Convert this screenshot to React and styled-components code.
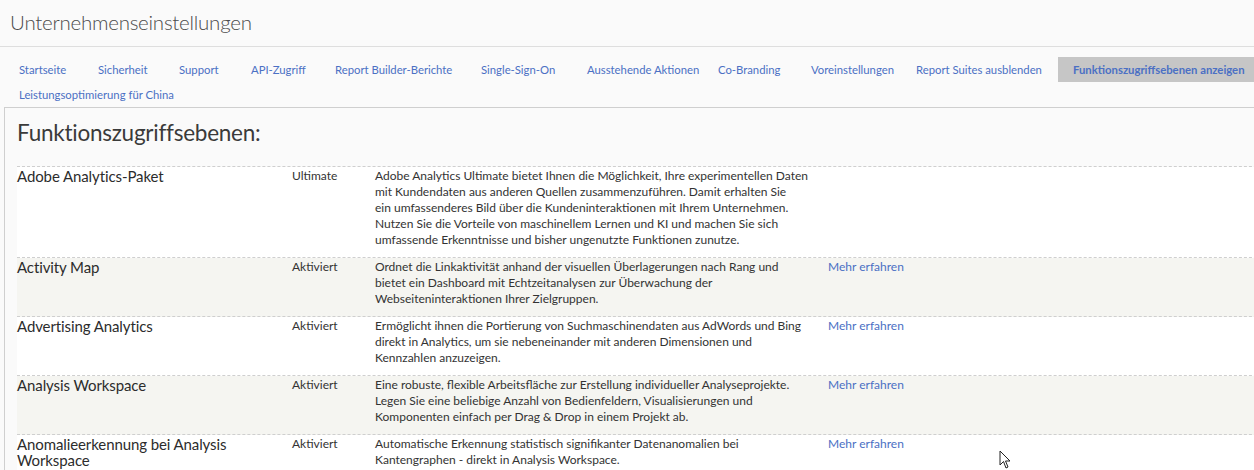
import React from "react";
import styled, { createGlobalStyle } from "styled-components";

const GlobalStyle = createGlobalStyle`
  html, body {
    margin: 0;
    padding: 0;
    background: #fafafa;
    overflow: hidden;
  }
  body {
    font-family: Lato, "Open Sans", sans-serif;
    color: #333;
  }
`;

const Page = styled.div`
  width: 1254px;
  height: 470px;
  overflow: hidden;
  position: relative;
`;

const Header = styled.div`
  height: 46px;
  padding-left: 10px;
  border-bottom: 1px solid #dedede;
  display: flex;
  align-items: center;
`;

const Title = styled.h1`
  margin: -3px 0 0;
  font-size: 20.5px;
  font-weight: 300;
  color: #4b4b4b;
  letter-spacing: -0.25px;
`;

const Nav = styled.nav`
  display: flex;
  flex-wrap: wrap;
  padding: 10px 0 0 4px;
  width: 1280px;
`;

const NavItem = styled.a`
  flex: 0 0 ${(p) => p.$w}px;
  box-sizing: border-box;
  height: 25px;
  line-height: 25px;
  padding-left: 15px;
  font-size: 11.3px;
  white-space: nowrap;
  color: #4b70c4;
  font-weight: ${(p) => (p.$active ? 700 : 400)};
  background: ${(p) => (p.$active ? "#c6c6c6" : "transparent")};
  text-decoration: none;
`;

const Panel = styled.section`
  margin: 0 0 0 4px;
  width: 1280px;
  border: 1px solid #cfcfcf;
  background: #fafafa;
  padding: 0 0 0 12px;
`;

const Heading = styled.h2`
  margin: 0;
  height: 48px;
  padding-top: 10px;
  font-size: 22.5px;
  line-height: 30px;
  font-weight: 400;
  color: #3a3a3a;
  letter-spacing: -0.25px;
`;

const Table = styled.div`
  border-top: 1px dashed #cfcfcf;
`;

const Row = styled.div`
  display: grid;
  grid-template-columns: 275px 83px 453px 1fr;
  padding: 1px 0 9px;
  border-bottom: 1px dashed #cfcfcf;
  background: ${(p) => (p.$shaded ? "#f5f5f1" : "#ffffff")};
`;

const Name = styled.div`
  font-size: 15px;
  line-height: 16px;
  color: #2c2c2c;
  letter-spacing: -0.1px;
`;

const Cell = styled.div`
  font-size: 12px;
  line-height: 16px;
  color: #333;
`;

const LearnMore = styled.a`
  display: block;
  font-size: 12px;
  line-height: 16px;
  color: #4b70c4;
  text-decoration: none;
`;

const Cursor = styled.svg`
  position: absolute;
  left: 999px;
  top: 450px;
`;

const tabs = [
  ["Startseite", 79],
  ["Sicherheit", 81],
  ["Support", 72],
  ["API-Zugriff", 84],
  ["Report Builder-Berichte", 146],
  ["Single-Sign-On", 106],
  ["Ausstehende Aktionen", 131],
  ["Co-Branding", 93],
  ["Voreinstellungen", 105],
  ["Report Suites ausblenden", 157],
  ["Funktionszugriffsebenen anzeigen", 220, true],
  ["Leistungsoptimierung für China", 200],
];

const features = [
  {
    name: ["Adobe Analytics-Paket"],
    status: "Ultimate",
    lines: [
      "Adobe Analytics Ultimate bietet Ihnen die Möglichkeit, Ihre experimentellen Daten",
      "mit Kundendaten aus anderen Quellen zusammenzuführen. Damit erhalten Sie",
      "ein umfassenderes Bild über die Kundeninteraktionen mit Ihrem Unternehmen.",
      "Nutzen Sie die Vorteile von maschinellem Lernen und KI und machen Sie sich",
      "umfassende Erkenntnisse und bisher ungenutzte Funktionen zunutze.",
    ],
    link: false,
  },
  {
    name: ["Activity Map"],
    status: "Aktiviert",
    lines: [
      "Ordnet die Linkaktivität anhand der visuellen Überlagerungen nach Rang und",
      "bietet ein Dashboard mit Echtzeitanalysen zur Überwachung der",
      "Webseiteninteraktionen Ihrer Zielgruppen.",
    ],
    link: true,
  },
  {
    name: ["Advertising Analytics"],
    status: "Aktiviert",
    lines: [
      "Ermöglicht ihnen die Portierung von Suchmaschinendaten aus AdWords und Bing",
      "direkt in Analytics, um sie nebeneinander mit anderen Dimensionen und",
      "Kennzahlen anzuzeigen.",
    ],
    link: true,
  },
  {
    name: ["Analysis Workspace"],
    status: "Aktiviert",
    lines: [
      "Eine robuste, flexible Arbeitsfläche zur Erstellung individueller Analyseprojekte.",
      "Legen Sie eine beliebige Anzahl von Bedienfeldern, Visualisierungen und",
      "Komponenten einfach per Drag & Drop in einem Projekt ab.",
    ],
    link: true,
  },
  {
    name: ["Anomalieerkennung bei Analysis", "Workspace"],
    status: "Aktiviert",
    lines: [
      "Automatische Erkennung statistisch signifikanter Datenanomalien bei",
      "Kantengraphen - direkt in Analysis Workspace.",
    ],
    link: true,
  },
];

export default function App() {
  return (
    <Page>
      <GlobalStyle />
      <Header>
        <Title>Unternehmenseinstellungen</Title>
      </Header>
      <Nav>
        {tabs.map(([label, w, active]) => (
          <NavItem key={label} $w={w} $active={active}>
            {label}
          </NavItem>
        ))}
      </Nav>
      <Panel>
        <Heading>Funktionszugriffsebenen:</Heading>
        <Table>
          {features.map((f, i) => (
            <Row key={f.name[0]} $shaded={i % 2 === 1}>
              <Name>
                {f.name.map((n) => (
                  <div key={n}>{n}</div>
                ))}
              </Name>
              <Cell>{f.status}</Cell>
              <Cell>
                {f.lines.map((l) => (
                  <div key={l}>{l}</div>
                ))}
              </Cell>
              <div>{f.link && <LearnMore>Mehr erfahren</LearnMore>}</div>
            </Row>
          ))}
        </Table>
      </Panel>
      <Cursor width="14" height="20" viewBox="0 0 14 20">
        <path d="M1 1 L1 15 L4.5 11.5 L7 18 L9 17 L6.5 11 L11 11 Z" fill="#fff" stroke="#222" strokeWidth="1" strokeLinejoin="round" />
      </Cursor>
    </Page>
  );
}
